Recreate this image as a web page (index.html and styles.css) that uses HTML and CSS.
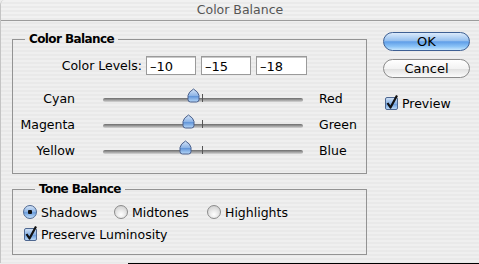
FILE: index.html
```html
<!DOCTYPE html>
<html lang="en">
<head>
    <meta charset="UTF-8"/>
    <title>Color Balance</title>
    <link rel="stylesheet" href="styles.css">
</head>
<body>
<div class="window">
    <div class="titlebar">Color Balance</div>

    <div class="dialog">
        <div class="groups">
            <fieldset class="group balance">
                <legend>Color Balance</legend>
                <div class="levels">
                    <span class="levels-label">Color Levels:</span>
                    <input class="level" type="text" value="&#8211;10">
                    <input class="level" type="text" value="&#8211;15">
                    <input class="level wide" type="text" value="&#8211;18">
                </div>

                <!-- thumb left = value + 100 (track is 200px for -100..100) -->
                <div class="sliders">
                    <div class="slider-row">
                        <span class="from">Cyan</span>
                        <div class="track">
                            <span class="tick"></span>
                            <svg class="thumb" style="left: 90px" width="13" height="15" viewBox="0 0 13 15"><defs><linearGradient id="tg1" x1="0" y1="0" x2="0" y2="1"><stop offset="0" stop-color="#d7e6f8"/><stop offset="0.5" stop-color="#8fb5e6"/><stop offset="0.55" stop-color="#5f93d8"/><stop offset="1" stop-color="#b8d8f8"/></linearGradient></defs><path d="M1 7.5 Q1.5 4 6.5 1 Q11.5 4 12 7.5 L12 11.5 Q12 14 9.5 14 L3.5 14 Q1 14 1 11.5 Z" fill="url(#tg1)" stroke="#4a5f8a"/></svg>
                        </div>
                        <span class="to">Red</span>
                    </div>
                    <div class="slider-row">
                        <span class="from">Magenta</span>
                        <div class="track">
                            <span class="tick"></span>
                            <svg class="thumb" style="left: 85px" width="13" height="15" viewBox="0 0 13 15"><path d="M1 7.5 Q1.5 4 6.5 1 Q11.5 4 12 7.5 L12 11.5 Q12 14 9.5 14 L3.5 14 Q1 14 1 11.5 Z" fill="url(#tg1)" stroke="#4a5f8a"/></svg>
                        </div>
                        <span class="to">Green</span>
                    </div>
                    <div class="slider-row">
                        <span class="from">Yellow</span>
                        <div class="track">
                            <span class="tick"></span>
                            <svg class="thumb" style="left: 82px" width="13" height="15" viewBox="0 0 13 15"><path d="M1 7.5 Q1.5 4 6.5 1 Q11.5 4 12 7.5 L12 11.5 Q12 14 9.5 14 L3.5 14 Q1 14 1 11.5 Z" fill="url(#tg1)" stroke="#4a5f8a"/></svg>
                        </div>
                        <span class="to">Blue</span>
                    </div>
                </div>
            </fieldset>

            <fieldset class="group tone">
                <legend>Tone Balance</legend>
                <div class="radios">
                    <label class="radio-item"><span class="radio on"></span>Shadows</label>
                    <label class="radio-item"><span class="radio"></span>Midtones</label>
                    <label class="radio-item"><span class="radio"></span>Highlights</label>
                </div>
                <label class="check-item">
                    <svg class="check" width="15" height="15" viewBox="0 0 15 15"><defs><linearGradient id="cg" x1="0" y1="0" x2="0" y2="1"><stop offset="0" stop-color="#d4e4f7"/><stop offset="0.5" stop-color="#8ab2e4"/><stop offset="0.55" stop-color="#6a9ddc"/><stop offset="1" stop-color="#c2def9"/></linearGradient></defs><rect x="1.5" y="2.5" width="12" height="12" rx="1.5" fill="url(#cg)" stroke="#4e6790"/><path d="M3.5 8 L6.5 12.5 L13 0.5" fill="none" stroke="#111" stroke-width="2.2" stroke-linejoin="round"/></svg>
                    Preserve Luminosity
                </label>
            </fieldset>
        </div>

        <div class="actions">
            <button class="btn default">OK</button>
            <button class="btn">Cancel</button>
            <label class="check-item preview">
                <svg class="check" width="15" height="15" viewBox="0 0 15 15"><rect x="1.5" y="2.5" width="12" height="12" rx="1.5" fill="url(#cg)" stroke="#4e6790"/><path d="M3.5 8 L6.5 12.5 L13 0.5" fill="none" stroke="#111" stroke-width="2.2" stroke-linejoin="round"/></svg>
                Preview
            </label>
        </div>
    </div>
</div>
</body>
</html>
```

FILE: styles.css
```css
/* Aqua-ish dialog, everything in DejaVu Sans as a Lucida Grande stand-in */
body {
    margin: 0;
    background: linear-gradient(to right, #ececec 128px, #000000 128px);
    font-family: "DejaVu Sans", "Liberation Sans", sans-serif;
    font-size: 12.5px;
    color: #000000;
}

.window {
    height: 263px;
    border-left: 1px solid #c4c4c4;
    border-top-left-radius: 5px;
    overflow: hidden;
    background: repeating-linear-gradient(#efefef 0 2px, #e9e9e9 2px 4px);
}

.titlebar {
    height: 20px;
    line-height: 20px;
    text-align: center;
    color: #555555;
    border-bottom: 1px solid #9c9c9c;
    background: repeating-linear-gradient(#f1f1f1 0 2px, #eaeaea 2px 4px);
}

.dialog {
    display: flex;
    padding: 11px 0 0 11px;
}

.groups {
    width: 355px;
    display: flex;
    flex-direction: column;
    gap: 8px;
}

.group {
    margin: 0;
    border: 1px solid #939393;
    padding: 0;
}

.group legend {
    margin-left: 12px;
    padding: 0 4px;
    font-weight: bold;
    font-size: 12px;
    letter-spacing: -0.6px;
    line-height: 15px;
}

/* ---- colour levels ---- */
.levels {
    display: flex;
    align-items: center;
    margin-top: 9px;
}

.levels-label {
    width: 129px;
    text-align: right;
    margin-right: 4px;
}

.level {
    box-sizing: border-box;
    width: 50px;
    height: 19px;
    margin: 0 5px 0 0;
    padding: 1px 3px 0;
    border: 1px solid #9a9a9a;
    box-shadow: inset 0 1px 0 #c9c9c9;
    background: #ffffff;
    font-family: inherit;
    font-size: 13px;
}

.level.wide {
    width: 51px;
}

/* ---- sliders ---- */
.sliders {
    margin-top: 10px;
    padding-bottom: 10px;
}

.slider-row {
    display: grid;
    grid-template-columns: 62px 200px auto;
    column-gap: 28px;
    align-items: center;
    height: 26px;
}

.slider-row .from {
    text-align: right;
}

.slider-row .to {
    margin-left: -12px;
}

.track {
    position: relative;
    height: 4px;
    margin-top: 3px;
    border-radius: 2px;
    background: linear-gradient(#6c6c6c, #9d9d9d 50%, #d6d6d6);
}

.tick {
    position: absolute;
    left: 99px;
    top: -4px;
    width: 1px;
    height: 8px;
    background: #555555;
}

.thumb {
    position: absolute;
    top: -10px;
    margin-left: -6px;
}

/* ---- tone balance ---- */
.tone {
    padding: 4px 0 9px 10px;
}

.radios {
    display: grid;
    grid-template-columns: 91px 93px auto;
    height: 22px;
    align-items: center;
}

.radio-item,
.check-item {
    display: flex;
    align-items: center;
    gap: 4px;
}

.radio {
    box-sizing: border-box;
    width: 14px;
    height: 14px;
    border-radius: 50%;
    border: 1px solid #8b8b8b;
    background: radial-gradient(circle at 50% 70%, #ffffff, #d8d8d8 70%, #bdbdbd);
}

.radio.on {
    border-color: #4d6791;
    background: radial-gradient(circle, #111111 0 2px, transparent 2.5px),
        linear-gradient(#d4e4f7, #8ab2e4 50%, #6a9ddc 55%, #c2def9);
}

.check-item {
    height: 22px;
    gap: 3px;
}

.check {
    margin-top: -2px;
}

/* ---- buttons ---- */
.actions {
    display: flex;
    flex-direction: column;
    margin-left: 16px;
}

.btn {
    width: 87px;
    height: 19px;
    margin-bottom: 8px;
    border-radius: 10px;
    border: 1px solid #8a8a8a;
    background: linear-gradient(#ffffff, #f3f3f3 50%, #e2e2e2 55%, #fbfbfb);
    font-family: inherit;
    font-size: 13px;
    line-height: 15px;
    padding: 0;
    color: #000000;
}

.btn.default {
    border-color: #3d5f93;
    background: linear-gradient(#dbeafb, #97c1ef 45%, #5f9ee8 52%, #8cc4f7 80%, #c6e6fd);
}

.preview {
    margin-top: 6px;
    margin-left: 1px;
}
```
